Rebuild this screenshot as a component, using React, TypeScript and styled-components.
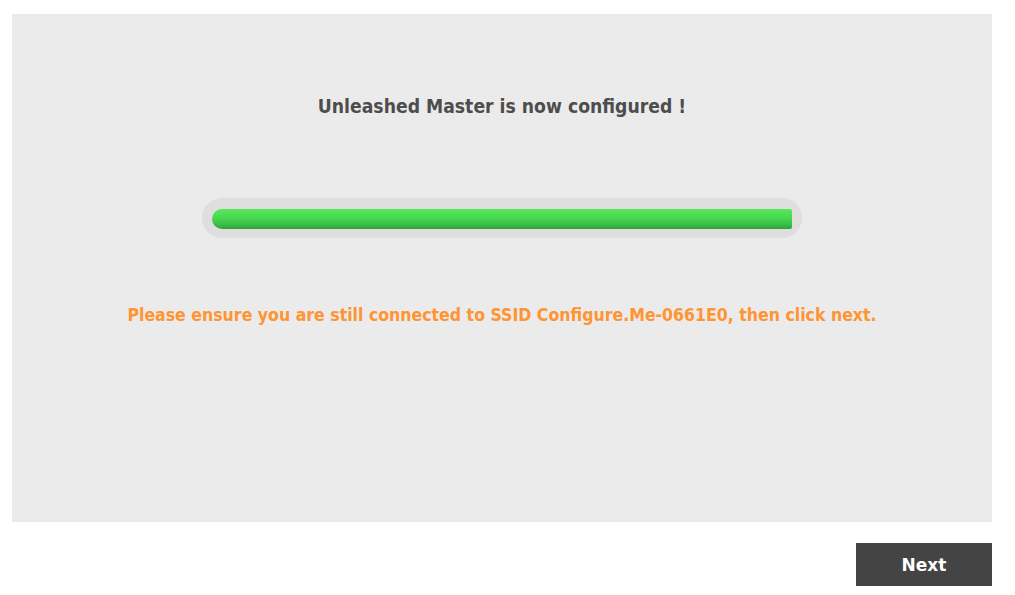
import React from "react";
import styled, { createGlobalStyle } from "styled-components";

const Global = createGlobalStyle`
  html, body { margin: 0; padding: 0; background: #ffffff; }
  body { font-family: "DejaVu Sans", Verdana, sans-serif; }
`;

const Page = styled.div`
  width: 1015px;
  height: 595px;
  box-sizing: border-box;
  padding: 14px 23px 0 12px;
  display: flex;
  flex-direction: column;
`;

const Panel = styled.div`
  height: 508px;
  background: #ebebeb;
  display: flex;
  flex-direction: column;
  align-items: center;
`;

const Title = styled.h1`
  margin: 71px 0 0;
  font-family: "DejaVu Sans Condensed", "DejaVu Sans", sans-serif;
  font-weight: bold;
  font-size: 19.2px;
  line-height: 44px;
  color: #4d4d4d;
`;

const Track = styled.div`
  margin-top: 69px;
  width: 600px;
  height: 40px;
  box-sizing: border-box;
  padding: 11px 10px 9px;
  border-radius: 20px;
  background: #dedede;
  display: flex;
`;

const Fill = styled.div<{ $pct: number }>`
  height: 20px;
  border-radius: 10px 2px 2px 10px;
  background: linear-gradient(to bottom, #5ae55a 0%, #47d94f 45%, #35b744 85%, #2f9f3c 100%);
`;

const Notice = styled.p`
  margin: 57px 0 0;
  font-family: "DejaVu Sans Condensed", "DejaVu Sans", sans-serif;
  font-weight: bold;
  font-size: 17.55px;
  line-height: 40px;
  color: #ff9433;
`;

const Footer = styled.div`
  display: flex;
  justify-content: flex-end;
  margin-top: 21px;
`;

const NextButton = styled.button`
  width: 136px;
  height: 43px;
  border: none;
  background: #444444;
  color: #ffffff;
  font-family: "DejaVu Sans", Verdana, sans-serif;
  font-weight: bold;
  font-size: 17px;
  cursor: pointer;
`;

export default function App() {
  const pct = 100;
  return (
    <>
      <Global />
      <Page>
        <Panel>
          <Title>Unleashed Master is now configured !</Title>
          <Track>
            <Fill $pct={pct} style={{ width: `${pct}%` }} />
          </Track>
          <Notice>
            Please ensure you are still connected to SSID Configure.Me-0661E0, then click next.
          </Notice>
        </Panel>
        <Footer>
          <NextButton>Next</NextButton>
        </Footer>
      </Page>
    </>
  );
}
